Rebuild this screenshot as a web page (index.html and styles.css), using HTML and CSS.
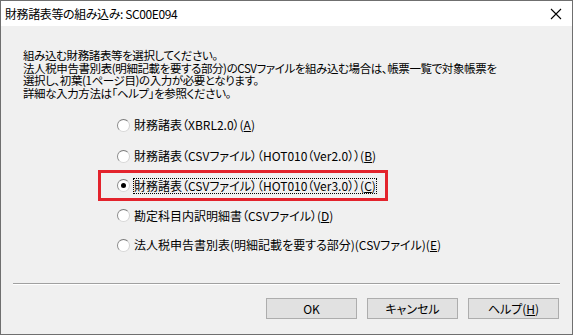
FILE: index.html
```html
<!DOCTYPE html>
<html lang="ja">
<head>
    <meta charset="UTF-8">
    <meta name="viewport" content="width=device-width, initial-scale=1.0">
    <title>財務諸表等の組み込み</title>
    <link rel="stylesheet" href="styles.css">
</head>
<body>
    <div class="window">
        <div class="titlebar">
            <span class="title">財務諸表等の組み込み: SC00E094</span>
            <svg class="close" width="12" height="12" viewBox="0 0 12 12">
                <path d="M1 1 L11 11 M11 1 L1 11" stroke="#000" stroke-width="1.1" fill="none"/>
            </svg>
        </div>
        <div class="content">
            <p class="message">
                組み込む財務諸表等を選択してください。<br>
                法人税申告書別表(明細記載を要する部分)のCSVファイルを組み込む場合は、帳票一覧で対象帳票を<br>
                選択し、初葉(1ページ目)の入力が必要となります。<br>
                詳細な入力方法は「ヘルプ」を参照ください。
            </p>
            <div class="options">
                <label class="option row-a">
                    <span class="radio"></span>
                    <span class="option-text">財務諸表（XBRL2.0）(<u>A</u>)</span>
                </label>
                <label class="option row-b">
                    <span class="radio"></span>
                    <span class="option-text">財務諸表（CSVファイル）（HOT010（Ver2.0））(<u>B</u>)</span>
                </label>
                <label class="option option-marked">
                    <span class="radio checked"></span>
                    <span class="option-text focused">財務諸表（CSVファイル）（HOT010（Ver3.0））(<u>C</u>)</span>
                </label>
                <label class="option row-d">
                    <span class="radio"></span>
                    <span class="option-text">勘定科目内訳明細書（CSVファイル）(<u>D</u>)</span>
                </label>
                <label class="option row-e">
                    <span class="radio"></span>
                    <span class="option-text">法人税申告書別表(明細記載を要する部分)(CSVファイル)(<u>E</u>)</span>
                </label>
            </div>
            <div class="separator"></div>
            <div class="buttons">
                <button class="btn">OK</button>
                <button class="btn">キャンセル</button>
                <button class="btn">ヘルプ(<u>H</u>)</button>
            </div>
        </div>
    </div>
</body>
</html>
```

FILE: styles.css
```css
body {
    margin: 0;
    font-family: "Noto Sans CJK JP", "Noto Sans", sans-serif;
    font-size: 12px;
    color: #000;
    background-color: #f0f0f0;
}
.window {
    width: 573px;
    height: 335px;
    box-sizing: border-box;
    border: 1px solid #6f6f6f;
    background-color: #f0f0f0;
    display: flex;
    flex-direction: column;
    overflow: hidden;
}
.titlebar {
    height: 25px;
    flex-shrink: 0;
    background-color: #ffffff;
    display: flex;
    align-items: center;
    justify-content: space-between;
    padding: 0 10px 0 4px;
}
.title {
    font-size: 12px;
    font-feature-settings: "palt";
    letter-spacing: -0.4px;
}
.content {
    flex: 1;
    display: flex;
    flex-direction: column;
}
.message {
    margin: 23px 0 0 22px;
    font-size: 11.5px;
    line-height: 12.5px;
    font-feature-settings: "palt";
    letter-spacing: -0.4px;
}
.options {
    margin: 11px 0 0 97px;
    display: flex;
    flex-direction: column;
    align-items: flex-start;
}
.option {
    height: 30px;
    display: flex;
    align-items: center;
    padding-left: 19px;
    font-size: 12px;
    font-feature-settings: "palt";
    letter-spacing: 0;
    white-space: nowrap;
}
.row-b {
    height: 32px;
}
.row-d {
    height: 29px;
}
.option-marked {
    width: 290px;
    height: 31px;
    box-sizing: border-box;
    border: 3px solid #e3232c;
    padding-left: 16px;
    margin-top: -2px;
}
.radio {
    width: 11px;
    height: 11px;
    flex-shrink: 0;
    border-radius: 50%;
    border: 1px solid #8a8a8a;
    border-top-color: #7a7a7a;
    border-bottom-color: #d8d8d8;
    border-right-color: #d0d0d0;
    background-color: #ffffff;
    margin-right: 4px;
    display: flex;
    align-items: center;
    justify-content: center;
}
.radio.checked::after {
    content: "";
    width: 5px;
    height: 5px;
    border-radius: 50%;
    background-color: #000;
}
.option-text {
    line-height: 14px;
}
.focused {
    outline: 1px dotted #000;
    outline-offset: 0;
}
.separator {
    margin: 23px 12px 0 12px;
    height: 1px;
    background-color: #a0a0a0;
    border-bottom: 1px solid #ffffff;
}
.buttons {
    display: flex;
    justify-content: flex-end;
    gap: 10px;
    margin: 13px 13px 0 0;
}
.btn {
    width: 91px;
    height: 21px;
    box-sizing: border-box;
    border: 1px solid #adadad;
    background-color: #e1e1e1;
    font-family: "Noto Sans CJK JP", "Noto Sans", sans-serif;
    font-size: 12px;
    font-feature-settings: "palt";
    padding: 0;
    color: #000;
}
```
